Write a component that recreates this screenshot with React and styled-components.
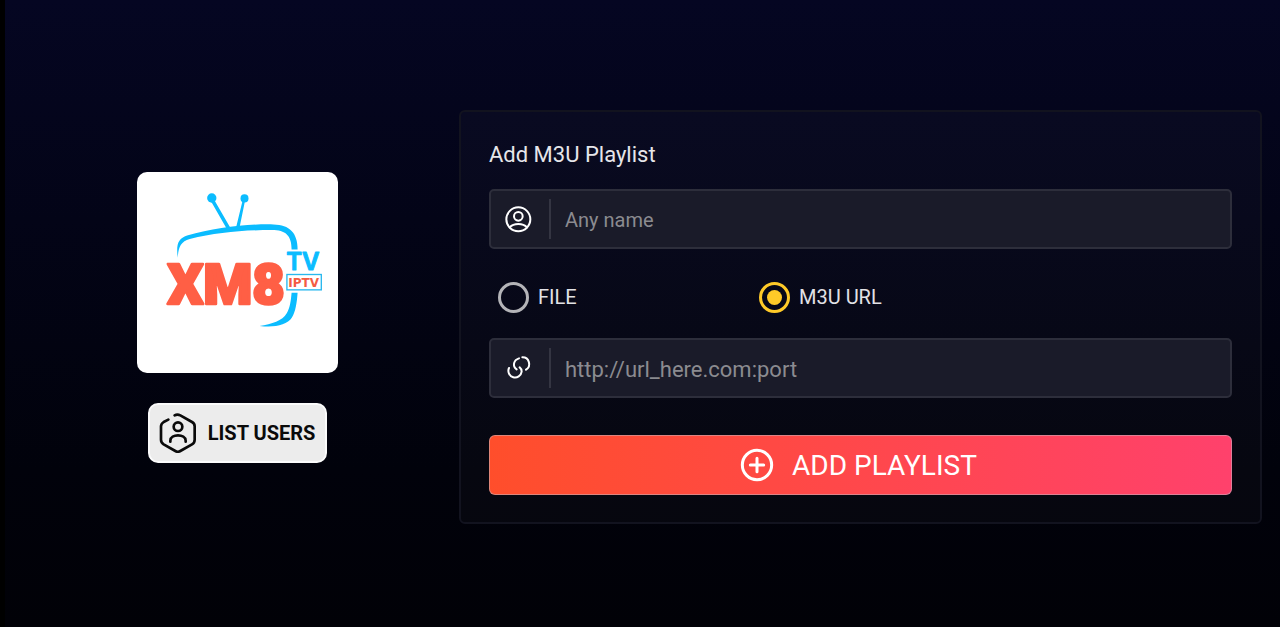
import React, { useState } from "react";
import styled, { createGlobalStyle } from "styled-components";

const GlobalStyle = createGlobalStyle`
  *, *::before, *::after { box-sizing: border-box; }
  body {
    margin: 0;
    background: #000;
    font-family: Roboto, "Liberation Sans", sans-serif;
  }
`;

const Page = styled.main`
  display: grid;
  grid-template-columns: 443fr 803fr;
  align-items: center;
  min-height: 100vh;
  padding: 7px 18px 0 11px;
  border-left: 5px solid #000;
  background: linear-gradient(180deg, #050622 0%, #030417 35%, #01020b 75%, #010107 100%);
`;

const Brand = styled.aside`
  display: flex;
  flex-direction: column;
  align-items: center;
  gap: 30px;
`;

const LogoCard = styled.div`
  width: 201px;
  border-radius: 10px;
  background: #fff;
  overflow: hidden;
  svg { display: block; width: 100%; }
`;

const ListButton = styled.button`
  display: flex;
  align-items: center;
  gap: 10px;
  height: 60px;
  padding: 0 10px 0 8px;
  border: 2px solid #fbfbfb;
  border-radius: 10px;
  background: #ececec;
  color: #0a0a0a;
  font: 700 20px/24px Roboto, "Liberation Sans", sans-serif;
  white-space: nowrap;
  cursor: pointer;
`;

const Panel = styled.form`
  display: flex;
  flex-direction: column;
  padding: 27px 28px;
  border: 2px solid #12131f;
  border-radius: 6px;
  background: rgba(255, 255, 255, 0.024);
`;

const Title = styled.h1`
  margin: 0 0 18px;
  color: #e6e6ea;
  font-size: 22px;
  font-weight: 400;
  line-height: 32px;
`;

const Field = styled.label`
  display: flex;
  align-items: center;
  height: 60px;
  padding-left: 13px;
  border: 2px solid #2d2e3b;
  border-radius: 5px;
  background: #1a1b29;
`;

const FieldInput = styled.input`
  flex: 1;
  min-width: 0;
  height: 40px;
  margin-left: 17px;
  padding: 2px 14px 0;
  border: 0;
  border-left: 2px solid #343542;
  outline: 0;
  background: transparent;
  color: #e6e6ea;
  font: 400 ${(p) => (p.$large ? 22 : 20)}px/24px Roboto, "Liberation Sans", sans-serif;
  &::placeholder { color: #8b8b90; opacity: 1; }
`;

const Options = styled.div`
  display: grid;
  grid-template-columns: 261px 1fr;
  margin: 33px 0 25px;
`;

const Option = styled.label`
  display: flex;
  align-items: center;
  gap: 9px;
  padding-left: 9px;
  color: #e2e2e6;
  font-size: 20px;
  line-height: 31px;
`;

const Radio = styled.input`
  appearance: none;
  width: 31px;
  height: 31px;
  margin: 0;
  border: 3px solid #b4b4b8;
  border-radius: 50%;
  &:checked {
    padding: 5px;
    border-color: #ffca28;
    background: #ffca28 content-box;
  }
`;

const SubmitButton = styled.button`
  display: flex;
  align-items: center;
  justify-content: center;
  gap: 18px;
  height: 60px;
  margin-top: 37px;
  padding: 0 4px 0 0;
  border: 1px solid rgba(190, 190, 200, 0.5);
  border-radius: 6px;
  background: linear-gradient(90deg, #ff4e2b, #ff416c) border-box;
  color: #fff;
  font: 400 28px/34px Roboto, "Liberation Sans", sans-serif;
  cursor: pointer;
`;

const SubmitLabel = styled.span`
  padding-top: 2px;
`;

const Icon = styled.svg`
  flex: none;
  width: ${(p) => p.$size}px;
  height: ${(p) => p.$size}px;
  fill: none;
  stroke: ${(p) => p.$color || "#fff"};
  stroke-linecap: round;
  stroke-linejoin: round;
`;

const LogoText = styled.text`
  font-family: ${(p) => p.$family};
  font-weight: ${(p) => p.$weight};
  font-size: ${(p) => p.$size}px;
  fill: ${(p) => p.$color};
  stroke: ${(p) => p.$color};
  stroke-width: ${(p) => p.$stroke || 0}px;
  stroke-linejoin: round;
`;

const Logo = () => (
  <svg viewBox="21 20 602 602" role="img" aria-label="XM8 TV IPTV">
    <g fill="#0bbcff">
      <circle cx="245" cy="98" r="14" />
      <circle cx="343" cy="99" r="12" />
      <path d="M240 103 L249 98 L301 188 L291 192 Z M338 102 L345 104 L328 187 L317 189 Z" />
      <path d="M143 277 C138 236 144 219 171 210 C256 187 350 175 430 177 C478 178 502 202 502 252 H484 C484 210 466 194 425 194 C340 194 258 201 179 221 C152 229 145 244 143 277 Z" />
      <path d="M484 382 H502 C500 411 496 439 485 456 C470 480 430 486 388 481 C425 476 457 465 469 444 C480 426 482 404 484 382 Z" />
    </g>
    <LogoText x="112" y="414" $family="Roboto" $weight="900" $size={168} $color="#ff5f45" $stroke={8}>XM8</LogoText>
    <LogoText x="468" y="315" $family="Inter" $weight="600" $size={72} $color="#0bbcff" $stroke={3}>TV</LogoText>
    <rect x="470" y="327" width="103" height="46" fill="#fff" stroke="#28b8ee" strokeWidth="4" />
    <LogoText x="474" y="363" $family="DejaVu Sans" $weight="700" $size={36} $color="#f45b43">IPTV</LogoText>
  </svg>
);

const HexUserIcon = () => (
  <Icon viewBox="51 52 120 120" strokeWidth="8" $size={40} $color="#0a0a0a" aria-hidden="true">
    <path d="M82 72 L68 79 C62 83 60 86 60 92 V132 C60 138 62 142 68 146 L103 166 C108 169 113 169 118 166 L153 146 C160 142 161 138 161 132 V92 C161 86 160 83 153 79 L118 59 C112 56 106 56 101 59" />
    <circle cx="111" cy="93" r="13" />
    <path d="M88 138 V135 C88 114 134 114 134 135 V138" />
  </Icon>
);

const UserIcon = () => (
  <Icon viewBox="147 299 84 84" strokeWidth="6" $size={28} aria-hidden="true">
    <circle cx="190" cy="342" r="36" />
    <circle cx="190" cy="333" r="13" />
    <path d="M164 366 C176 353 204 353 216 366" />
  </Icon>
);

const LinkIcon = () => (
  <Icon viewBox="13 13 84 84" strokeWidth="6" $size={28} aria-hidden="true">
    <path d="M28 55 A20 20 0 1 0 66 66 C66 60 64 56 60 53" />
    <path d="M58 26 C42 31 37 49 51 59" />
    <path d="M68 23 A20 20 0 0 1 79 60" />
  </Icon>
);

const PlusIcon = () => (
  <Icon viewBox="0 0 102 102" strokeWidth="9" $size={34} aria-hidden="true">
    <circle cx="51" cy="51" r="44" />
    <path d="M51 31 V71 M31 51 H71" />
  </Icon>
);

export default function App() {
  const [source, setSource] = useState("url");
  return (
    <>
      <GlobalStyle />
      <Page>
        <Brand>
          <LogoCard><Logo /></LogoCard>
          <ListButton type="button"><HexUserIcon />LIST USERS</ListButton>
        </Brand>
        <Panel onSubmit={(e) => e.preventDefault()}>
          <Title>Add M3U Playlist</Title>
          <Field>
            <UserIcon />
            <FieldInput type="text" aria-label="Playlist name" placeholder="Any name" />
          </Field>
          <Options role="radiogroup" aria-label="Playlist source">
            <Option>
              <Radio type="radio" name="source" checked={source === "file"} onChange={() => setSource("file")} />
              FILE
            </Option>
            <Option>
              <Radio type="radio" name="source" checked={source === "url"} onChange={() => setSource("url")} />
              M3U URL
            </Option>
          </Options>
          <Field>
            <LinkIcon />
            <FieldInput $large type="text" aria-label="Playlist URL" placeholder="http://url_here.com:port" />
          </Field>
          <SubmitButton type="submit"><PlusIcon /><SubmitLabel>ADD PLAYLIST</SubmitLabel></SubmitButton>
        </Panel>
      </Page>
    </>
  );
}
